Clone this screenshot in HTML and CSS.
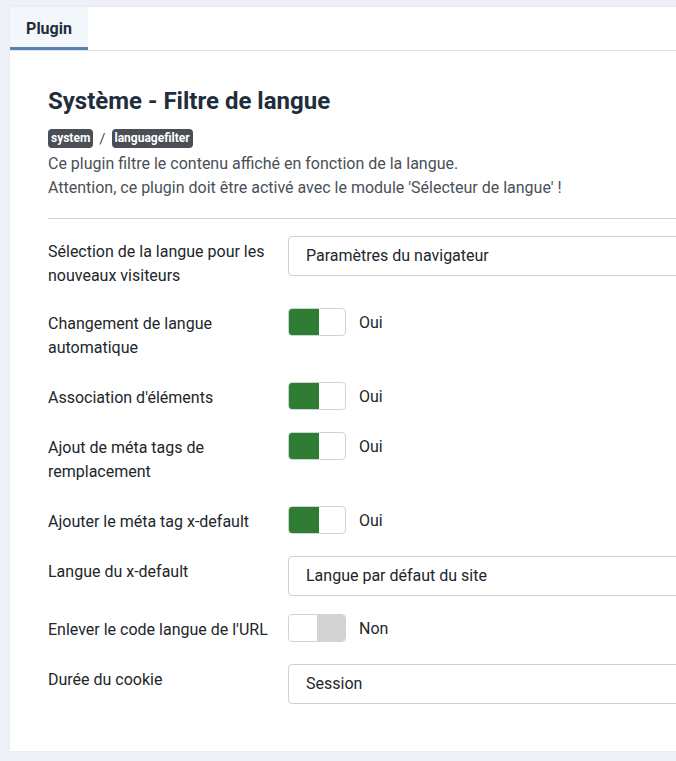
FILE: index.html
```html
<!DOCTYPE html>
<html lang="fr">
<head>
    <meta charset="UTF-8">
    <meta name="viewport" content="width=device-width, initial-scale=1.0">
    <title>Système - Filtre de langue</title>
    <link rel="stylesheet" href="styles.css">
</head>
<body>

<div class="card">
    <div class="tabs">
        <button class="tab active">Plugin</button>
    </div>

    <div class="tab-pane">
        <h1 class="title">Système - Filtre de langue</h1>
        <div class="crumbs">
            <span class="badge">system</span>
            <span class="sep">/</span>
            <span class="badge">languagefilter</span>
        </div>
        <p class="info">
            Ce plugin filtre le contenu affiché en fonction de la langue.<br>
            Attention, ce plugin doit être activé avec le module 'Sélecteur de langue' !
        </p>
        <hr>

        <div class="control-group">
            <label class="control-label">Sélection de la langue pour les nouveaux visiteurs</label>
            <div class="controls">
                <div class="select">Paramètres du navigateur</div>
            </div>
        </div>

        <div class="control-group">
            <label class="control-label">Changement de langue automatique</label>
            <div class="controls">
                <span class="switch on"><span class="knob"></span></span>
                <span class="switch-text">Oui</span>
            </div>
        </div>

        <div class="control-group">
            <label class="control-label">Association d'éléments</label>
            <div class="controls">
                <span class="switch on"><span class="knob"></span></span>
                <span class="switch-text">Oui</span>
            </div>
        </div>

        <div class="control-group">
            <label class="control-label">Ajout de méta tags de remplacement</label>
            <div class="controls">
                <span class="switch on"><span class="knob"></span></span>
                <span class="switch-text">Oui</span>
            </div>
        </div>

        <div class="control-group">
            <label class="control-label">Ajouter le méta tag x-default</label>
            <div class="controls">
                <span class="switch on"><span class="knob"></span></span>
                <span class="switch-text">Oui</span>
            </div>
        </div>

        <div class="control-group">
            <label class="control-label">Langue du x-default</label>
            <div class="controls">
                <div class="select">Langue par défaut du site</div>
            </div>
        </div>

        <div class="control-group">
            <label class="control-label">Enlever le code langue de l'URL</label>
            <div class="controls">
                <span class="switch off"><span class="knob"></span></span>
                <span class="switch-text">Non</span>
            </div>
        </div>

        <div class="control-group">
            <label class="control-label">Durée du cookie</label>
            <div class="controls">
                <div class="select">Session</div>
            </div>
        </div>
    </div>
</div>

</body>
</html>
```

FILE: styles.css
```css
html, body {
    overflow: hidden;
}
body {
    margin: 0;
    padding: 7px 0 10px 10px;
    background-color: #edf1f7;
    font-family: Roboto, "Liberation Sans", sans-serif;
    font-size: 16px;
    color: #22262a;
}
.card {
    width: 720px;
    background-color: #fff;
    box-shadow: 0 0 2px rgba(0,0,0,0.06);
}
.tabs {
    display: flex;
    height: 43px;
    border-bottom: 1px solid #dfe3e7;
}
.tab {
    font-family: inherit;
    font-size: 16px;
    font-weight: 700;
    color: #1f2d3d;
    background: #f3f6fa;
    border: none;
    border-bottom: 3px solid #5a81b5;
    padding: 3px 0 0;
    width: 78px;
}
.tab-pane {
    padding: 36px 0 47px 38px;
}
.title {
    margin: 0;
    font-size: 24px;
    line-height: 29px;
    font-weight: 700;
    color: #1f2d3d;
}
.crumbs {
    display: flex;
    align-items: center;
    gap: 6px;
    margin-top: 13px;
}
.badge {
    background-color: #4a4f56;
    color: #fff;
    font-size: 12px;
    font-weight: 700;
    line-height: 19px;
    padding: 0 3px;
    border-radius: 4px;
}
.sep {
    color: #495057;
    font-size: 15px;
}
.info {
    margin: 4px 0 0;
    line-height: 24px;
    color: #495057;
}
hr {
    border: none;
    border-top: 1px solid #cdd2d8;
    margin: 18px 0 17px;
}
.control-group {
    display: flex;
    align-items: flex-start;
    margin-bottom: 18px;
}
hr + .control-group .control-label {
    padding-bottom: 2px;
}
.control-group:last-child {
    margin-bottom: 0;
}
.control-label {
    width: 240px;
    flex-shrink: 0;
    padding: 4px 16px 4px 0;
    box-sizing: border-box;
    line-height: 24px;
    color: #22262a;
}
.controls {
    flex: 1;
    display: flex;
    align-items: center;
}
.select {
    width: 100%;
    height: 40px;
    box-sizing: border-box;
    border: 1px solid #cdd3da;
    border-radius: 4px;
    padding: 0 17px;
    line-height: 38px;
    color: #22262a;
}
.switch {
    display: flex;
    width: 58px;
    height: 28px;
    margin-bottom: 4px;
    box-sizing: border-box;
    border: 1px solid #cdd3da;
    border-radius: 4px;
    overflow: hidden;
}
.knob {
    width: 30px;
    height: 100%;
}
.switch.on .knob {
    background-color: #2e7d32;
}
.switch.off {
    justify-content: flex-end;
}
.switch.off .knob {
    width: 28px;
    background-color: #d3d3d3;
}
.switch-text {
    margin: 0 0 4px 13px;
    color: #22262a;
}
```
